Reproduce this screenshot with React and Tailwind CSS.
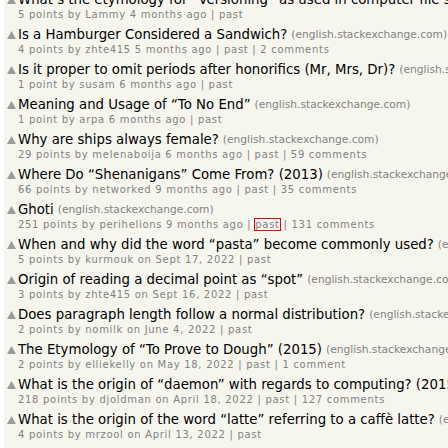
const items = [
  { title: 'What’s the etymology for “Versioning” as used in computer file systems?', site: 'english.stackexchange.com', sub: '5 points by Lammy 4 months ago', comments: '' },
  { title: 'Is a Hamburger Considered a Sandwich?', site: 'english.stackexchange.com', sub: '4 points by zhte415 5 months ago', comments: '2 comments' },
  { title: 'Is it proper to omit periods after honorifics (Mr, Mrs, Dr)?', site: 'english.stackexchange.com', sub: '1 point by susam 6 months ago', comments: '' },
  { title: 'Meaning and Usage of “To No End”', site: 'english.stackexchange.com', sub: '1 point by arpa 6 months ago', comments: '' },
  { title: 'Why are ships always female?', site: 'english.stackexchange.com', sub: '29 points by melenaboija 6 months ago', comments: '59 comments' },
  { title: 'Where Do “Shenanigans” Come From? (2013)', site: 'english.stackexchange.com', sub: '66 points by networked 9 months ago', comments: '35 comments' },
  { title: 'Ghoti', site: 'english.stackexchange.com', sub: '251 points by perihelions 9 months ago', comments: '131 comments', focus: true },
  { title: 'When and why did the word “pasta” become commonly used?', site: 'english.stackexchange.com', sub: '5 points by kurmouk on Sept 17, 2022', comments: '' },
  { title: 'Origin of reading a decimal point as “spot”', site: 'english.stackexchange.com', sub: '3 points by zhte415 on Sept 16, 2022', comments: '' },
  { title: 'Does paragraph length follow a normal distribution?', site: 'english.stackexchange.com', sub: '2 points by nomilk on June 4, 2022', comments: '' },
  { title: 'The Etymology of “To Prove to Dough” (2015)', site: 'english.stackexchange.com', sub: '2 points by elliekelly on May 18, 2022', comments: '1 comment' },
  { title: 'What is the origin of “daemon” with regards to computing? (2015)', site: 'english.stackexchange.com', sub: '218 points by djoldman on April 18, 2022', comments: '127 comments' },
  { title: 'What is the origin of the word “latte” referring to a caffè latte?', site: 'english.stackexchange.com', sub: '4 points by mrzool on April 13, 2022', comments: '' },
]

function VoteArrow() {
  return (
    <svg width="9" height="8" viewBox="0 0 9 8" className="block">
      <polygon points="4.5,0 9,8 0,8" fill="#9a9a9a" />
    </svg>
  )
}

export default function App() {
  return (
    <div
      className="w-[448px] h-[448px] overflow-hidden bg-white"
      style={{ fontFamily: '"DejaVu Sans", Verdana, Geneva, sans-serif' }}
    >
      <div className="ml-[4px] h-full bg-[#f6f6ef] overflow-hidden">
        <div className="-mt-2 flex flex-col">
          {items.map((it, i) => (
            <div key={i} className="flex flex-col mb-[6px] whitespace-nowrap">
              <div className="flex items-center h-[16px]">
                <div className="w-[14px] shrink-0 pl-[3px]">
                  <VoteArrow />
                </div>
                <span className="text-[13.3px] leading-[16px] text-black">{it.title}</span>
                <span className="ml-[4px] text-[10.67px] leading-[16px] text-[#828282]">({it.site})</span>
              </div>
              <div className="mt-[1px] pl-[14px] text-[10px] tracking-[0.7px] leading-[12px] text-[#828282]">
                {it.sub} |{' '}
                <span className={it.focus ? 'outline outline-1 outline-red-600' : ''}>past</span>
                {it.comments && <> | {it.comments}</>}
              </div>
            </div>
          ))}
        </div>
      </div>
    </div>
  )
}
